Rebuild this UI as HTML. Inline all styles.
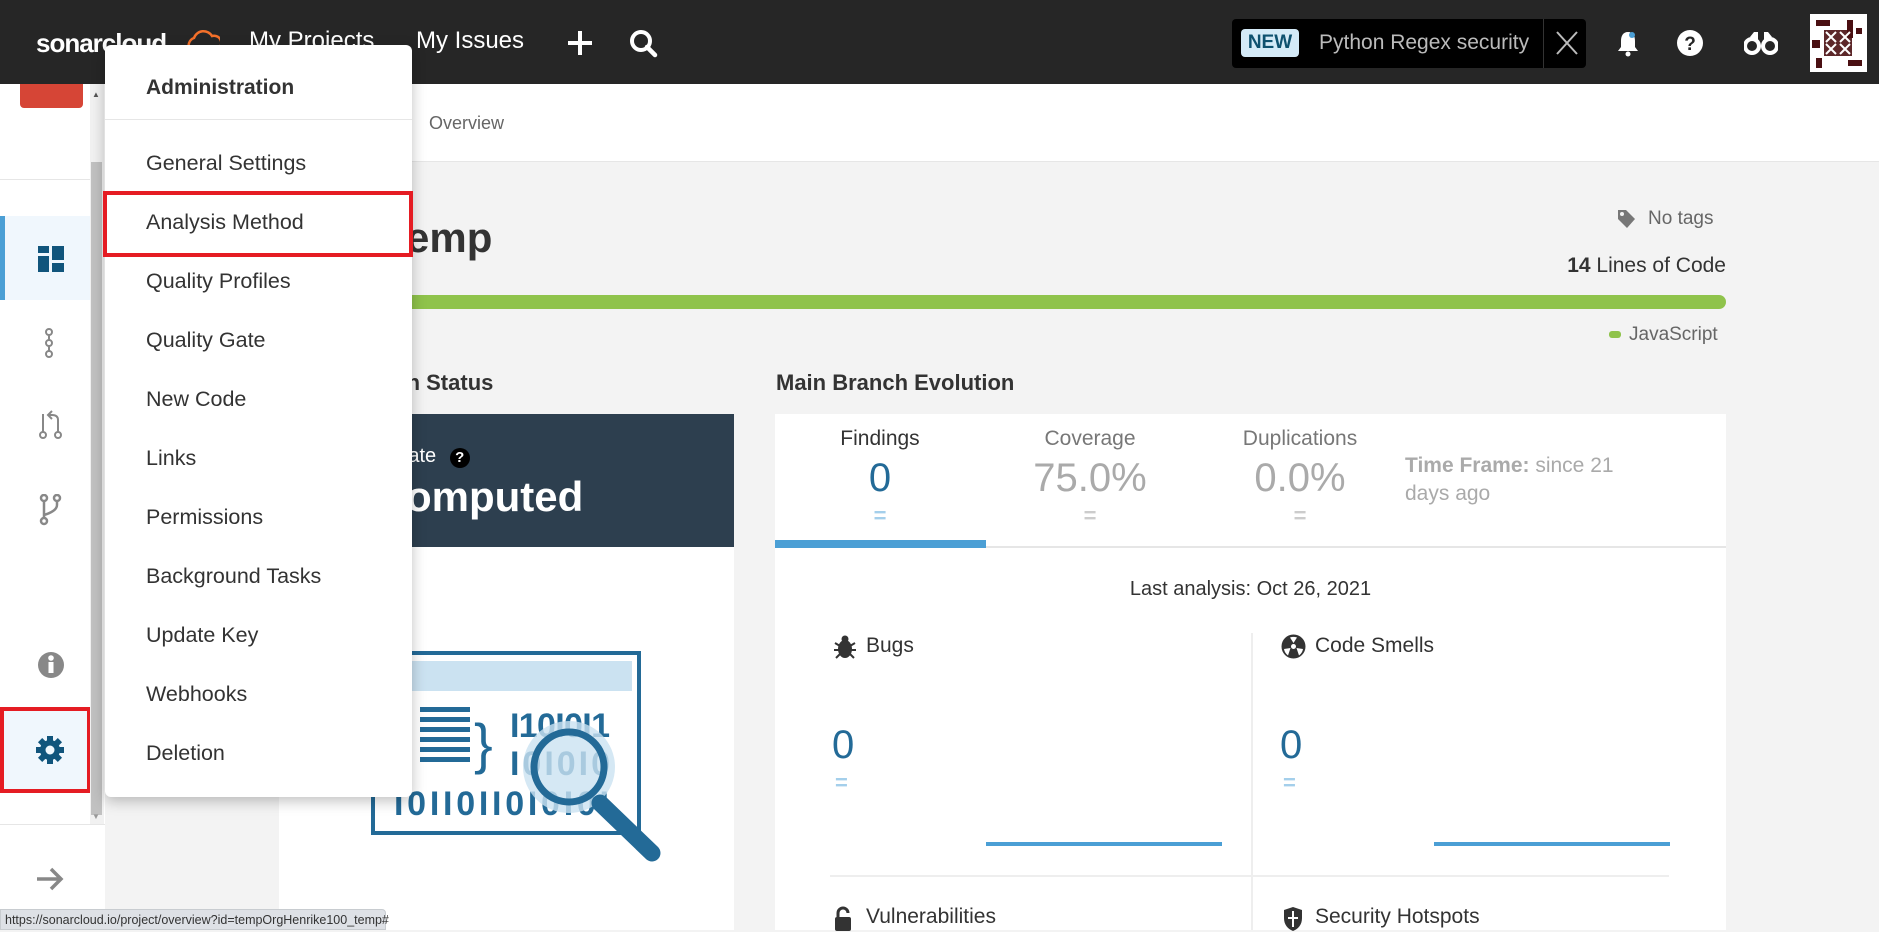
<!DOCTYPE html>
<html><head><meta charset="utf-8"><style>
*{box-sizing:border-box;margin:0;padding:0}
body{width:1879px;height:930px;overflow:hidden;background:#f3f3f3;font-family:"Liberation Sans",sans-serif;color:#333;position:relative}
.a{position:absolute;white-space:nowrap}
.top{left:0;top:0;width:1879px;height:84px;background:#262626}
.nav{color:#fff;font-size:24px;top:27px}
.mi{left:146px;font-size:21.5px;color:#333}
.tab{font-size:21px;color:#777;text-align:center;width:200px}
.val{font-size:40px;color:#aaa;text-align:center;width:200px}
.eq{font-size:22px;color:#ccc;text-align:center;width:200px;font-weight:bold}
</style></head><body>
<div class="a top"></div>
<div class="a" style="left:36px;top:28px;color:#fff;font-size:26px;font-weight:bold;letter-spacing:-1px">sonarcloud</div>
<svg class="a" style="left:186px;top:26px" width="34" height="28"><path d="M4 24 A8 8 0 0 1 8 12 A10 10 0 0 1 26 10 A7 7 0 0 1 30 24" fill="none" stroke="#f3702a" stroke-width="2.5"/></svg>
<div class="a nav" style="left:249px">My Projects</div>
<div class="a nav" style="left:416px">My Issues</div>
<svg class="a" style="left:566px;top:29px" width="28" height="28"><path d="M14 2v24M2 14h24" stroke="#fff" stroke-width="4"/></svg>
<svg class="a" style="left:629px;top:29px" width="30" height="30"><circle cx="12" cy="12" r="9" fill="none" stroke="#fff" stroke-width="4"/><path d="M18 18l8 8" stroke="#fff" stroke-width="4.5" stroke-linecap="round"/></svg>
<div class="a" style="left:1232px;top:19px;width:354px;height:49px;background:#000;border-radius:4px"></div>
<div class="a" style="left:1241px;top:29px;width:58px;height:28px;background:#d4eaf7;border-radius:4px;color:#0e516f;font-weight:bold;font-size:19px;text-align:center;line-height:28px">NEW</div>
<div class="a" style="left:1319px;top:31px;color:#bbb;font-size:21px">Python Regex security</div>
<div class="a" style="left:1543px;top:19px;width:1px;height:49px;background:#333"></div>
<svg class="a" style="left:1555px;top:30px" width="24" height="26"><path d="M2 2l20 22M22 2L2 24" stroke="#bbb" stroke-width="2"/></svg>
<svg class="a" style="left:1616px;top:30px" width="24" height="28"><path d="M12 2c-5 0-7 4-7 9v6l-3 4h20l-3-4v-6c0-5-2-9-7-9z" fill="#fff"/><circle cx="12" cy="24" r="2.5" fill="#fff"/><circle cx="16" cy="5" r="3" fill="#4b9fd5"/></svg>
<svg class="a" style="left:1676px;top:29px" width="28" height="28"><circle cx="14" cy="14" r="13" fill="#fff"/><text x="14" y="21" font-family="Liberation Sans" font-weight="bold" font-size="19" text-anchor="middle" fill="#262626">?</text></svg>
<svg class="a" style="left:1744px;top:31px" width="34" height="24"><circle cx="8" cy="15" r="7" fill="none" stroke="#fff" stroke-width="4"/><circle cx="26" cy="15" r="7" fill="none" stroke="#fff" stroke-width="4"/><path d="M6 6l4-5h4v8M28 6l-4-5h-4v8" fill="#fff"/></svg>
<svg class="a" style="left:1810px;top:14px" width="57" height="58"><rect width="57" height="58" fill="#fff"/><g fill="#4a0f12"><rect x="6" y="6" width="14" height="6"/><rect x="37" y="6" width="6" height="18"/><rect x="14" y="16" width="28" height="26" opacity=".9"/><rect x="6" y="44" width="6" height="10"/><rect x="38" y="46" width="14" height="6"/><rect x="46" y="14" width="6" height="6"/><rect x="2" y="26" width="8" height="8"/></g><g stroke="#fff" stroke-width="2"><path d="M16 18l10 10M26 18L16 28M30 18l10 10M40 18L30 28M16 30l10 10M26 30L16 40M30 30l10 10M40 30L30 40"/></g></svg>

<!-- sidebar -->
<div class="a" style="left:0;top:84px;width:105px;height:846px;background:#fff"></div>
<div class="a" style="left:20px;top:84px;width:63px;height:24px;background:#d64536;border-radius:0 0 4px 4px"></div>
<div class="a" style="left:0;top:179px;width:90px;height:1px;background:#e6e6e6"></div>
<div class="a" style="left:0;top:216px;width:90px;height:84px;background:#f0f7fd;border-left:5px solid #4b9fd5"></div>
<svg class="a" style="left:38px;top:246px" width="26" height="26"><g fill="#11557c"><rect x="0" y="0" width="11" height="7"/><rect x="0" y="10" width="11" height="16"/><rect x="14" y="0" width="12" height="14"/><rect x="14" y="17" width="12" height="9"/></g></svg>
<svg class="a" style="left:43px;top:328px" width="16" height="30"><g fill="none" stroke="#888" stroke-width="2"><circle cx="6" cy="4" r="3"/><circle cx="6" cy="15" r="3"/><circle cx="6" cy="26" r="3"/><path d="M6 7v5M6 18v5"/></g></svg>
<svg class="a" style="left:38px;top:410px" width="26" height="30"><g fill="none" stroke="#888" stroke-width="2"><circle cx="5" cy="25" r="3"/><circle cx="20" cy="25" r="3"/><path d="M5 4v18M20 22V10q0-5-6-5h-3"/><path d="M14 1l-4 4 4 4"/></g></svg>
<svg class="a" style="left:38px;top:494px" width="26" height="32"><g fill="none" stroke="#888" stroke-width="2.5"><circle cx="6" cy="4" r="3"/><circle cx="19" cy="4" r="3"/><circle cx="6" cy="27" r="3"/><path d="M6 7v17M19 7v4q0 6-13 10"/></g></svg>
<svg class="a" style="left:37px;top:651px" width="28" height="28"><circle cx="14" cy="14" r="13" fill="#888"/><rect x="11.5" y="11" width="5" height="11" fill="#fff"/><circle cx="14" cy="7" r="2.8" fill="#fff"/></svg>
<div class="a" style="left:0;top:707px;width:91px;height:86px;background:#f0f7fd;border:4px solid #e51c23"></div>
<svg class="a" style="left:35px;top:735px" width="30" height="30" viewBox="0 0 30 30"><g fill="#11557c"><circle cx="15" cy="15" r="10"/><g id="t"><rect x="12" y="1" width="6" height="6"/><rect x="12" y="23" width="6" height="6"/><rect x="1" y="12" width="6" height="6"/><rect x="23" y="12" width="6" height="6"/></g><use href="#t" transform="rotate(45 15 15)"/></g><circle cx="15" cy="15" r="4.5" fill="#f0f7fd"/></svg>
<div class="a" style="left:0;top:824px;width:105px;height:1px;background:#e6e6e6"></div>
<svg class="a" style="left:35px;top:866px" width="30" height="26"><path d="M2 13h24M16 3l10 10-10 10" fill="none" stroke="#888" stroke-width="3.5"/></svg>
<div class="a" style="left:90px;top:84px;width:14px;height:740px;background:#f1f1f1"></div>
<div class="a" style="left:91px;top:162px;width:11px;height:653px;background:#c1c1c1"></div>
<div class="a" style="left:92px;top:90px;font-size:8px;color:#555">▲</div>
<div class="a" style="left:92px;top:812px;font-size:8px;color:#999">▼</div>

<!-- breadcrumb bar -->
<div class="a" style="left:105px;top:84px;width:1774px;height:78px;background:#fff;border-bottom:1px solid #e6e6e6"></div>
<div class="a" style="left:429px;top:113px;font-size:18px;color:#666">Overview</div>

<div class="a" style="left:392px;top:214px;font-size:42px;font-weight:bold;color:#333">temp</div>
<svg class="a" style="left:1616px;top:208px" width="20" height="22"><path d="M2 2h8l9 9-8 9-9-9z" fill="#777"/><circle cx="6" cy="6" r="2" fill="#f3f3f3"/></svg>
<div class="a" style="left:1648px;top:208px;font-size:19px;color:#666">No tags</div>
<div class="a" style="right:153px;top:254px;font-size:21px;color:#333"><b>14</b> Lines of Code</div>
<div class="a" style="left:279px;top:295px;width:1447px;height:14px;background:#8fc34b;border-radius:7px"></div>
<div class="a" style="left:1609px;top:331px;width:12px;height:7px;background:#8fc34b;border-radius:3px"></div>
<div class="a" style="left:1629px;top:324px;font-size:19px;color:#666">JavaScript</div>

<div class="a" style="left:288px;top:370px;font-size:22px;font-weight:bold">Main Branch Status</div>
<div class="a" style="left:279px;top:414px;width:455px;height:516px;background:#fff"></div>
<div class="a" style="left:279px;top:414px;width:455px;height:133px;background:#2d3f4f"></div>
<div class="a" style="left:325px;top:445px;font-size:20px;color:#fff">Quality Gate <span style="display:inline-block;width:20px;height:20px;border-radius:10px;background:#000;color:#fff;font-size:15px;font-weight:bold;text-align:center;line-height:20px;margin-left:8px">?</span></div>
<div class="a" style="left:301px;top:473px;font-size:42px;font-weight:bold;color:#fff">Not computed</div>

<svg class="a" style="left:340px;top:645px" width="340" height="230" viewBox="0 0 340 230">
<rect x="33" y="8" width="266" height="180" fill="#fff" stroke="#236a97" stroke-width="4"/>
<rect x="40" y="16" width="252" height="30" fill="#cbe2f1"/>
<circle cx="40" cy="32" r="4" fill="#236a97"/><circle cx="54" cy="32" r="4" fill="#236a97"/>
<g fill="#236a97"><rect x="80" y="62" width="50" height="5"/><rect x="80" y="72" width="50" height="5"/><rect x="80" y="82" width="50" height="5"/><rect x="80" y="92" width="50" height="5"/><rect x="80" y="102" width="50" height="5"/><rect x="80" y="112" width="50" height="5"/></g>
<text x="134" y="118" font-family="Liberation Sans" font-size="56" fill="#236a97">}</text>
<text x="170" y="92" font-family="Liberation Sans" font-weight="bold" font-size="34" fill="#236a97" textLength="100">I10I0I1</text>
<text x="170" y="130" font-family="Liberation Sans" font-weight="bold" font-size="34" fill="#236a97" textLength="100">I0I0I0</text>
<text x="54" y="170" font-family="Liberation Sans" font-weight="bold" font-size="34" fill="#236a97" textLength="215">I0II0II0I0I0I</text>
<circle cx="229" cy="122" r="46" fill="#cbe2f1" opacity=".8"/>
<circle cx="229" cy="122" r="35" fill="none" stroke="#236a97" stroke-width="7"/>
<path d="M260 158l52 50" stroke="#236a97" stroke-width="17" stroke-linecap="round"/>
</svg>

<!-- evolution -->
<div class="a" style="left:776px;top:370px;font-size:22px;font-weight:bold">Main Branch Evolution</div>
<div class="a" style="left:775px;top:414px;width:951px;height:516px;background:#fff"></div>
<div class="a" style="left:775px;top:546px;width:951px;height:2px;background:#e6e6e6"></div>
<div class="a" style="left:775px;top:540px;width:211px;height:8px;background:#4b9fd5"></div>
<div class="a tab" style="left:780px;top:427px;color:#333">Findings</div>
<div class="a val" style="left:780px;top:456px;color:#236a97">0</div>
<div class="a eq" style="left:780px;top:503px;color:#a4cfeb">=</div>
<div class="a tab" style="left:990px;top:427px">Coverage</div>
<div class="a val" style="left:990px;top:456px">75.0%</div>
<div class="a eq" style="left:990px;top:503px">=</div>
<div class="a tab" style="left:1200px;top:427px">Duplications</div>
<div class="a val" style="left:1200px;top:456px">0.0%</div>
<div class="a eq" style="left:1200px;top:503px">=</div>
<div class="a" style="left:1405px;top:452px;font-size:21px;color:#aaa;line-height:28px"><b>Time Frame:</b> since 21<br>days ago</div>
<div class="a" style="left:775px;top:578px;width:951px;text-align:center;font-size:20px;color:#333">Last analysis: Oct 26, 2021</div>
<div class="a" style="left:1251px;top:633px;width:2px;height:297px;background:#eee"></div>
<div class="a" style="left:830px;top:875px;width:839px;height:2px;background:#eee"></div>
<svg class="a" style="left:833px;top:634px" width="24" height="26"><g fill="#333"><ellipse cx="12" cy="15" rx="7" ry="9"/><circle cx="12" cy="5" r="3.5"/><path d="M2 9l5 3M22 9l-5 3M1 16h5M23 16h-5M3 24l4-4M21 24l-4-4" stroke="#333" stroke-width="2"/></g></svg>
<div class="a" style="left:866px;top:634px;font-size:21px">Bugs</div>
<svg class="a" style="left:1281px;top:634px" width="25" height="25"><circle cx="12.5" cy="12.5" r="12" fill="#333"/><circle cx="12.5" cy="12.5" r="2.5" fill="#fff"/><path d="M12.5 9L9 3.5A10 10 0 0 1 16 3.5zM9.5 14L3 15A10 10 0 0 0 7 21.5zM15.5 14L22 15A10 10 0 0 1 18 21.5z" fill="#fff"/></svg>
<div class="a" style="left:1315px;top:634px;font-size:21px">Code Smells</div>
<div class="a" style="left:832px;top:723px;font-size:40px;color:#236a97">0</div>
<div class="a" style="left:835px;top:770px;font-size:22px;font-weight:bold;color:#a4cfeb">=</div>
<div class="a" style="left:1280px;top:723px;font-size:40px;color:#236a97">0</div>
<div class="a" style="left:1283px;top:770px;font-size:22px;font-weight:bold;color:#a4cfeb">=</div>
<div class="a" style="left:986px;top:842px;width:236px;height:4px;background:#4b9fd5"></div>
<div class="a" style="left:1434px;top:842px;width:236px;height:4px;background:#4b9fd5"></div>
<svg class="a" style="left:833px;top:906px" width="20" height="26"><rect x="2" y="11" width="16" height="14" rx="2" fill="#333"/><path d="M5 11V7a5 5 0 0 1 10 0" fill="none" stroke="#333" stroke-width="3"/></svg>
<div class="a" style="left:866px;top:905px;font-size:21px">Vulnerabilities</div>
<svg class="a" style="left:1282px;top:906px" width="22" height="26"><path d="M11 1L2 4v8c0 7 4 11 9 13 5-2 9-6 9-13V4z" fill="#333"/><path d="M11 5v16M6 12h10" stroke="#fff" stroke-width="2"/></svg>
<div class="a" style="left:1315px;top:905px;font-size:21px">Security Hotspots</div>

<!-- dropdown -->
<div class="a" style="left:105px;top:45px;width:307px;height:752px;background:#fff;border-radius:6px;box-shadow:0 4px 14px rgba(0,0,0,.25)"></div>
<div class="a" style="left:146px;top:76px;font-size:21px;font-weight:bold;color:#333">Administration</div>
<div class="a" style="left:105px;top:119px;width:307px;height:1px;background:#e6e6e6"></div>
<div class="a mi" style="top:151px">General Settings</div>
<div class="a mi" style="top:210px">Analysis Method</div>
<div class="a mi" style="top:269px">Quality Profiles</div>
<div class="a mi" style="top:328px">Quality Gate</div>
<div class="a mi" style="top:387px">New Code</div>
<div class="a mi" style="top:446px">Links</div>
<div class="a mi" style="top:505px">Permissions</div>
<div class="a mi" style="top:564px">Background Tasks</div>
<div class="a mi" style="top:623px">Update Key</div>
<div class="a mi" style="top:682px">Webhooks</div>
<div class="a mi" style="top:741px">Deletion</div>
<div class="a" style="left:103px;top:191px;width:310px;height:66px;border:4px solid #e51c23"></div>

<div class="a" style="left:0;top:909px;width:386px;height:21px;background:#dee1e6;border:1px solid #c8ccd0;border-radius:0 4px 0 0;font-size:12.5px;color:#333;padding:3px 4px">https://sonarcloud.io/project/overview?id=tempOrgHenrike100_temp#</div>
</body></html>
